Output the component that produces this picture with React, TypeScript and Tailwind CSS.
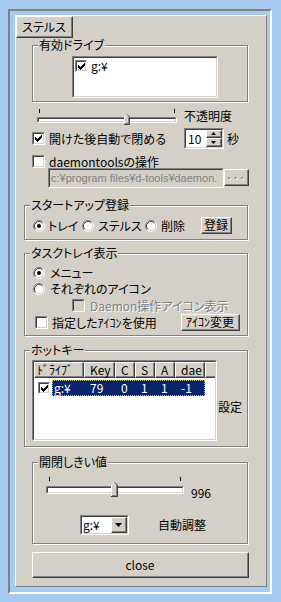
import { FC, ReactNode } from "react";

const Raised: FC<{ className?: string; children?: ReactNode }> = ({ className = "", children }) => (
  <div
    className={`shrink-0 border border-t-white border-l-white border-r-[#404040] border-b-[#404040] bg-[#d4d0c8] ${className}`}
  >
    <div className="flex h-full w-full items-center justify-center border-r border-b border-r-[#808080] border-b-[#808080]">
      {children}
    </div>
  </div>
);

const Sunken: FC<{ className?: string; inner?: string; children?: ReactNode }> = ({
  className = "",
  inner = "bg-white",
  children,
}) => (
  <div className={`shrink-0 border border-t-[#808080] border-l-[#808080] border-r-white border-b-white ${className}`}>
    <div
      className={`h-full w-full border border-t-[#404040] border-l-[#404040] border-r-[#d4d0c8] border-b-[#d4d0c8] ${inner}`}
    >
      {children}
    </div>
  </div>
);

const Check: FC<{ checked?: boolean; disabled?: boolean; small?: boolean }> = ({ checked, disabled, small }) => (
  <Sunken
    className={small ? "h-[12px] w-[12px]" : "h-[13px] w-[13px]"}
    inner={`flex items-center justify-center ${disabled ? "bg-[#d4d0c8]" : "bg-white"}`}
  >
    {checked && (
      <svg width="7" height="7" viewBox="0 0 7 7" shapeRendering="crispEdges">
        <path
          d="M0 2h1v3H0zM1 3h1v3H1zM2 4h1v3H2zM3 3h1v3H3zM4 2h1v3H4zM5 1h1v3H5zM6 0h1v3H6z"
          fill="#000"
        />
      </svg>
    )}
  </Sunken>
);

const Radio: FC<{ checked?: boolean }> = ({ checked }) => (
  <svg width="12" height="12" viewBox="0 0 12 12" className="shrink-0">
    <circle cx="6" cy="6" r="5" fill="#fff" />
    <path d="M2.11 9.89A5.5 5.5 0 0 1 9.89 2.11" fill="none" stroke="#808080" />
    <path d="M9.89 2.11A5.5 5.5 0 0 1 2.11 9.89" fill="none" stroke="#fff" />
    <path d="M2.82 9.18A4.5 4.5 0 0 1 9.18 2.82" fill="none" stroke="#404040" />
    <path d="M9.18 2.82A4.5 4.5 0 0 1 2.82 9.18" fill="none" stroke="#d4d0c8" />
    {checked && <circle cx="6" cy="6" r="2" fill="#000" />}
  </svg>
);

// trackbar thumb, pointing up
const Thumb: FC<{ w: number; h: number }> = ({ w, h }) => {
  const m = w / 2;
  const t = Math.floor(w / 2);
  return (
    <svg width={w} height={h} viewBox={`0 0 ${w} ${h}`}>
      <polygon points={`0,${t} ${m},0 ${w},${t} ${w},${h} 0,${h}`} fill="#d4d0c8" />
      <polyline points={`0.5,${h} 0.5,${t} ${m},0.5`} fill="none" stroke="#fff" />
      <polyline points={`${m},0.5 ${w - 0.5},${t} ${w - 0.5},${h - 0.5} 0,${h - 0.5}`} fill="none" stroke="#404040" />
      <polyline points={`${w - 1.5},${t + 0.5} ${w - 1.5},${h - 1.5} 1,${h - 1.5}`} fill="none" stroke="#808080" />
    </svg>
  );
};

const Arrow: FC<{ up?: boolean; w?: number; h?: number }> = ({ up, w = 5, h = 3 }) => (
  <svg width={w} height={h} viewBox={`0 0 ${w} ${h}`}>
    <polygon points={up ? `0,${h} ${w / 2},0 ${w},${h}` : `0,0 ${w},0 ${w / 2},${h}`} fill="#000" />
  </svg>
);

const Group: FC<{ label: string; className: string; children?: ReactNode }> = ({ label, className, children }) => (
  <div className={`shrink-0 border border-[#808080] shadow-[1px_1px_0_#fff,inset_1px_1px_0_#fff] ${className}`}>
    <div className="-mt-[8px] ml-[5px] h-[14px] w-fit bg-[#d4d0c8] px-[1px] leading-[14px]">{label}</div>
    {children}
  </div>
);

const App: FC = () => {
  return (
    <div className="h-[602px] w-[281px] bg-[#a6caf0] pt-[9px] pl-[8px] font-['Noto_Sans_CJK_JP',sans-serif] text-[12px] leading-[14px] text-black [font-feature-settings:'palt']">
      <div className="h-[585px] w-[264px] border-2 border-t-[#808080] border-l-[#808080] border-r-white border-b-white pt-[4px] pl-[5px]">
        <div className="flex h-[572px] w-[252px] flex-col border border-t-white border-l-white border-r-[#808080] border-b-[#808080] bg-[#d4d0c8]">
          {/* tab */}
          <Raised className="h-[22px] w-[57px]">ステルス</Raised>

          {/* 有効ドライブ */}
          <Group label="有効ドライブ" className="mt-[7px] ml-[16px] h-[57px] w-[216px]">
            <Sunken className="mt-[4px] ml-[39px] h-[42px] w-[146px]">
              <div className="flex items-center pt-[1px] pl-[1px]">
                <Check checked small />
                <span className="ml-[4px]">g:¥</span>
              </div>
            </Sunken>
          </Group>

          {/* 不透明度 slider */}
          <div className="mt-[6px] ml-[21px] flex items-start">
            <div className="relative h-[17px] w-[140px]">
              <div className="absolute top-[1px] left-[2px] h-[4px] w-[1px] bg-black" />
              <div className="absolute top-[1px] left-[137px] h-[4px] w-[1px] bg-black" />
              <Sunken className="absolute top-[9px] left-0 h-[6px] w-[140px]" />
              <div className="absolute top-[6px] left-[87px] flex">
                <Thumb w={6} h={11} />
              </div>
            </div>
            <span className="mt-[1px] ml-[7px]">不透明度</span>
          </div>

          {/* 開けた後自動で閉める */}
          <div className="mt-[3px] ml-[16px] flex h-[21px] items-center">
            <Check checked />
            <span className="w-[139px] pl-[4px]">開けた後自動で閉める</span>
            <Sunken className="h-[21px] w-[40px]" inner="bg-white flex">
              <span className="pl-[2px] leading-[17px]">10</span>
              <div className="ml-auto flex w-[16px] flex-col">
                <Raised className="h-[8px] w-[16px]">
                  <Arrow up />
                </Raised>
                <Raised className="h-[9px] w-[16px]">
                  <Arrow />
                </Raised>
              </div>
            </Sunken>
            <span className="ml-[3px]">秒</span>
          </div>

          {/* daemontools */}
          <div className="mt-[6px] ml-[16px] flex h-[13px] items-center">
            <Check />
            <span className="pl-[4px]">daemontoolsの操作</span>
          </div>
          <div className="ml-[32px] flex items-start">
            <Sunken className="h-[20px] w-[176px]" inner="bg-[#d4d0c8] overflow-hidden">
              <div className="pl-[1px] font-['Liberation_Sans','Noto_Sans_CJK_JP',sans-serif] text-[11px] leading-[16px] whitespace-nowrap text-[#808080]">
                c:¥program files¥d-tools¥daemon.
              </div>
            </Sunken>
            <Raised className="mt-[1px] h-[17px] w-[25px]">
              <span className="text-[11px] leading-[12px] tracking-[1px] text-[#808080] [text-shadow:1px_1px_0_#fff]">
                ･･･
              </span>
            </Raised>
          </div>

          {/* スタートアップ登録 */}
          <Group label="スタートアップ登録" className="mt-[17px] ml-[8px] h-[35px] w-[224px]">
            <div className="mt-[5px] flex h-[17px] items-center pl-[8px]">
              <div className="flex w-[49px] items-center">
                <Radio checked />
                <span className="ml-[3px]">トレイ</span>
              </div>
              <div className="flex w-[63px] items-center">
                <Radio />
                <span className="ml-[4px]">ステルス</span>
              </div>
              <div className="flex w-[56px] items-center">
                <Radio />
                <span className="ml-[4px]">削除</span>
              </div>
              <Raised className="h-[17px] w-[31px]">登録</Raised>
            </div>
          </Group>

          {/* タスクトレイ表示 */}
          <Group label="タスクトレイ表示" className="mt-[13px] ml-[8px] h-[83px] w-[224px]">
            <div className="mt-[6px] flex h-[14px] items-center pl-[8px]">
              <Radio checked />
              <span className="ml-[5px]">メニュー</span>
            </div>
            <div className="mt-[2px] flex h-[14px] items-center pl-[8px]">
              <Radio />
              <span className="ml-[5px]">それぞれのアイコン</span>
            </div>
            <div className="mt-[3px] flex h-[13px] items-center pl-[47px]">
              <Check disabled />
              <span className="ml-[5px] text-[#808080] [text-shadow:1px_1px_0_#fff]">Daemon操作アイコン表示</span>
            </div>
            <div className="mt-[2px] flex h-[17px] items-center pl-[10px]">
              <Check />
              <span className="w-[133px] pl-[4px]">指定したｱｲｺﾝを使用</span>
              <Raised className="h-[17px] w-[59px]">ｱｲｺﾝ変更</Raised>
            </div>
          </Group>

          {/* ホットキー */}
          <Group label="ホットキー" className="mt-[14px] ml-[8px] h-[97px] w-[224px]">
            <div className="flex items-start">
              <Sunken className="mt-[3px] ml-[7px] h-[81px] w-[185px]" inner="bg-white overflow-hidden">
                <div className="flex h-[16px]">
                  <Raised className="h-[16px] w-[50px]">
                    <span className="w-full pl-[2px]">ﾄﾞﾗｲﾌﾞ</span>
                  </Raised>
                  <Raised className="h-[16px] w-[31px]">
                    <span className="w-full pl-[5px]">Key</span>
                  </Raised>
                  <Raised className="h-[16px] w-[20px]">
                    <span className="w-full pl-[5px]">C</span>
                  </Raised>
                  <Raised className="h-[16px] w-[20px]">
                    <span className="w-full pl-[5px]">S</span>
                  </Raised>
                  <Raised className="h-[16px] w-[20px]">
                    <span className="w-full pl-[5px]">A</span>
                  </Raised>
                  <Raised className="h-[16px] w-[30px]">
                    <span className="w-full pl-[5px]">dae</span>
                  </Raised>
                  <Raised className="h-[16px] w-[20px]" />
                </div>
                <div className="mt-[2px] flex h-[16px] items-center pl-[4px]">
                  <Check checked small />
                  <div className="ml-[2px] flex h-[16px] w-[153px] items-center bg-[#0a246a] text-white outline-1 outline-dotted outline-offset-[-1px] outline-[#c8c080]">
                    <span className="w-[32px] pl-[2px]">g:¥</span>
                    <span className="w-[31px] pl-[6px]">79</span>
                    <span className="w-[20px] pl-[6px]">0</span>
                    <span className="w-[20px] pl-[6px]">1</span>
                    <span className="w-[20px] pl-[6px]">1</span>
                    <span className="w-[30px] pl-[6px]">-1</span>
                  </div>
                </div>
              </Sunken>
              <span className="mt-[43px] ml-[1px]">設定</span>
            </div>
          </Group>

          {/* 開閉しきい値 */}
          <Group label="開閉しきい値" className="mt-[15px] ml-[16px] h-[82px] w-[216px]">
            <div className="mt-[7px] ml-[13px] flex items-start">
              <div className="relative h-[21px] w-[138px]">
                <div className="absolute top-[1px] left-[3px] h-[4px] w-[1px] bg-black" />
                <div className="absolute top-[1px] left-[134px] h-[4px] w-[1px] bg-black" />
                <Sunken className="absolute top-[10px] left-0 h-[8px] w-[138px]" />
                <div className="absolute top-[6px] left-[65px] flex">
                  <Thumb w={7} h={15} />
                </div>
              </div>
              <span className="mt-[10px] ml-[7px]">996</span>
            </div>
            <div className="mt-[15px] ml-[47px] flex items-center">
              <Sunken className="h-[20px] w-[49px]" inner="bg-white flex items-center">
                <span className="pl-[1px]">g:¥</span>
                <Raised className="ml-auto h-[16px] w-[16px]">
                  <Arrow w={7} h={4} />
                </Raised>
              </Sunken>
              <span className="ml-[29px]">自動調整</span>
            </div>
          </Group>

          {/* close */}
          <Raised className="mt-[8px] ml-[16px] h-[26px] w-[217px]">close</Raised>
        </div>
      </div>
    </div>
  );
};

export default App;
